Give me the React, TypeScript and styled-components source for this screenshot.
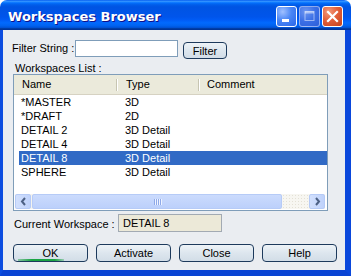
import styled, { createGlobalStyle } from 'styled-components';

const GlobalStyle = createGlobalStyle`
  html, body {
    margin: 0;
    padding: 0;
    background: #ffffff;
  }
  body {
    font-family: "Liberation Sans", Arial, sans-serif;
    font-size: 11px;
    color: #000;
  }
`;

// Window frame
const Window = styled.div`
  width: 351px;
  height: 276px;
  display: flex;
  flex-direction: column;
  overflow: hidden;
`;

const TitleBar = styled.div`
  height: 30px;
  flex: none;
  display: flex;
  align-items: center;
  padding: 0 8px 0 8px;
  border-radius: 7px 7px 0 0;
  background: linear-gradient(
    to bottom,
    #0058ee 0%,
    #3593ff 4%,
    #288eff 6%,
    #127dff 8%,
    #036ffc 10%,
    #0262ee 14%,
    #0057e5 20%,
    #0054e3 24%,
    #0055eb 56%,
    #005bf5 66%,
    #026afe 76%,
    #0062ef 86%,
    #0052d6 92%,
    #0040ab 94%,
    #003092 100%
  );
`;

const Title = styled.div`
  flex: 1;
  color: #fff;
  font-family: "DejaVu Sans", "Liberation Sans", sans-serif;
  font-weight: bold;
  font-size: 13px;
  text-shadow: 1px 1px #0f1089;
  padding-top: 2px;
`;

const Controls = styled.div`
  display: flex;
  gap: 2px;
  margin-top: 3px;
`;

const CtrlButton = styled.div<{ $kind: 'min' | 'max' | 'close' }>`
  width: 21px;
  height: 21px;
  box-sizing: border-box;
  border-radius: 3px;
  border: 1px solid ${(p) => (p.$kind === 'max' ? 'rgba(255,255,255,0.45)' : '#fff')};
  display: flex;
  align-items: center;
  justify-content: center;
  background: ${(p) =>
    p.$kind === 'close'
      ? 'radial-gradient(circle at 30% 25%, #f39a7c 0%, #e35f3a 45%, #c4421b 100%)'
      : p.$kind === 'max'
      ? 'radial-gradient(circle at 30% 25%, #6c95f0 0%, #3b6fe6 50%, #2d5fd8 100%)'
      : 'radial-gradient(circle at 30% 25%, #a0c0ff 0%, #4a86f5 45%, #2a66e8 100%)'};
`;

// Client area
const Body = styled.div`
  flex: 1;
  display: flex;
  flex-direction: column;
  background: #eaedf1;
  border-left: 3px solid #0c4de0;
  border-right: 6px solid #0a48dc;
  border-bottom: 6px solid #0a44d4;
  padding: 0 0 0 10px;
`;

const FilterRow = styled.div`
  display: flex;
  align-items: flex-start;
  margin-top: 10px;
  height: 18px;
`;

const Label = styled.span`
  line-height: 17px;
  white-space: nowrap;
`;

const FilterLabel = styled(Label)`
  margin-left: -1px;
  width: 63px;
`;

const TextInput = styled.div`
  width: 103px;
  height: 17px;
  box-sizing: border-box;
  background: #fff;
  border: 1px solid #7f9db9;
`;

const PushButton = styled.div<{ $w: number; $default?: boolean }>`
  position: relative;
  width: ${(p) => p.$w}px;
  height: 18px;
  box-sizing: border-box;
  border: 1px solid #1d3a5c;
  border-radius: 4px;
  background: linear-gradient(to bottom, #eef3f7 0%, #dde6ee 50%, #d2dde7 100%);
  display: flex;
  align-items: center;
  justify-content: center;
  line-height: 16px;
  &::after {
    content: '';
    display: ${(p) => (p.$default ? 'block' : 'none')};
    position: absolute;
    left: 4px;
    bottom: 0;
    width: 46px;
    height: 2px;
    background: linear-gradient(to right, rgba(22, 160, 60, 0.4), #1aa444 30%, #1aa444 80%, rgba(22, 160, 60, 0.3));
  }
`;

const SmallButton = styled(PushButton)`
  height: 17px;
  margin: 2px 0 0 5px;
`;

const ListLabel = styled(Label)`
  margin: 4px 0 0 2px;
  line-height: 12px;
  height: 12px;
`;

// List view
const ListBox = styled.div`
  width: 315px;
  height: 137px;
  box-sizing: border-box;
  border: 1px solid #7f9db9;
  background: #fff;
  display: flex;
  flex-direction: column;
`;

const Header = styled.div`
  height: 20px;
  flex: none;
  display: grid;
  grid-template-columns: 102px 82px 1fr;
  background: #ebeadb;
  border-bottom: 1px solid #d6d2c2;
  box-sizing: border-box;
`;

const HeaderCell = styled.div<{ $pad: number; $sep?: boolean }>`
  padding-left: ${(p) => p.$pad}px;
  line-height: 19px;
  position: relative;
  &::before {
    content: '';
    display: ${(p) => (p.$sep ? 'block' : 'none')};
    position: absolute;
    left: 0;
    top: 4px;
    height: 12px;
    width: 1px;
    background: #c7c5b2;
    box-shadow: 1px 0 #fff;
  }
`;

const Rows = styled.div`
  display: flex;
  flex-direction: column;
  padding-left: 5px;
  flex: 1;
`;

const Row = styled.div<{ $selected?: boolean }>`
  height: 14px;
  line-height: 14px;
  display: grid;
  grid-template-columns: 104px 1fr;
  padding-left: 2px;
  background: ${(p) => (p.$selected ? '#316ac5' : 'transparent')};
  color: ${(p) => (p.$selected ? '#fff' : '#000')};
`;

const ScrollBar = styled.div`
  height: 15px;
  margin: 0 2px 1px 1px;
  display: flex;
  background: #f4f3ee;
`;

const ScrollArrow = styled.div`
  width: 16px;
  height: 15px;
  box-sizing: border-box;
  border: 1px solid #b6cbf7;
  border-radius: 2px;
  background: linear-gradient(to right, #d2e0fd 0%, #bfd2fb 100%);
  display: flex;
  align-items: center;
  justify-content: center;
`;

const Thumb = styled.div`
  width: 250px;
  margin-left: 1px;
  height: 15px;
  box-sizing: border-box;
  border: 1px solid #b6cbf7;
  border-radius: 2px;
  background: linear-gradient(to bottom, #cbdbfd 0%, #bcd0fb 100%);
  display: flex;
  align-items: center;
  justify-content: center;
  gap: 1px;
`;

const Grip = styled.span`
  width: 1px;
  height: 6px;
  background: #8ea9e8;
  box-shadow: 1px 0 #eef3ff;
`;

const Track = styled.div`
  flex: 1;
  background-color: #f7f6f1;
  background-image: radial-gradient(#e4e1d6 0.6px, transparent 0.8px);
  background-size: 3px 3px;
`;

const CurrentRow = styled.div`
  display: flex;
  align-items: center;
  margin-top: 3px;
  height: 18px;
`;

const CurrentLabel = styled(Label)`
  width: 104px;
  margin-left: 1px;
  line-height: 18px;
  padding-top: 2px;
`;

const ReadOnlyBox = styled.div`
  width: 104px;
  height: 18px;
  box-sizing: border-box;
  border: 1px solid #a2aab3;
  background: #ece9d8;
  padding-left: 4px;
  line-height: 17px;
`;

const ButtonRow = styled.div`
  display: flex;
  gap: 8px;
  margin-top: 12px;
`;

const Chevron = ({ dir }: { dir: 'left' | 'right' }) => (
  <svg width="7" height="9" viewBox="0 0 7 9">
    <path
      d={dir === 'left' ? 'M5 1 L2 4.5 L5 8' : 'M2 1 L5 4.5 L2 8'}
      fill="none"
      stroke="#4d6185"
      strokeWidth="2"
    />
  </svg>
);

const rows = [
  { name: '*MASTER', type: '3D' },
  { name: '*DRAFT', type: '2D' },
  { name: 'DETAIL 2', type: '3D Detail' },
  { name: 'DETAIL 4', type: '3D Detail' },
  { name: 'DETAIL 8', type: '3D Detail', selected: true },
  { name: 'SPHERE', type: '3D Detail' },
];

export default function App() {
  return (
    <>
      <GlobalStyle />
      <Window>
        <TitleBar>
          <Title>Workspaces Browser</Title>
          <Controls>
            <CtrlButton $kind="min">
              <svg width="19" height="19" viewBox="0 0 19 19">
                <rect x="5" y="12" width="7" height="3" fill="#fff" />
              </svg>
            </CtrlButton>
            <CtrlButton $kind="max">
              <svg width="19" height="19" viewBox="0 0 19 19">
                <rect x="5" y="4.5" width="9" height="9" fill="none" stroke="rgba(255,255,255,0.5)" strokeWidth="1" />
                <rect x="5" y="4.5" width="9" height="2" fill="rgba(255,255,255,0.5)" />
              </svg>
            </CtrlButton>
            <CtrlButton $kind="close">
              <svg width="19" height="19" viewBox="0 0 19 19">
                <path d="M5 5 L14 14 M14 5 L5 14" stroke="#fff" strokeWidth="2.2" strokeLinecap="square" />
              </svg>
            </CtrlButton>
          </Controls>
        </TitleBar>
        <Body>
          <FilterRow>
            <FilterLabel>Filter String :</FilterLabel>
            <TextInput />
            <SmallButton $w={44}>Filter</SmallButton>
          </FilterRow>
          <ListLabel>Workspaces List :</ListLabel>
          <ListBox>
            <Header>
              <HeaderCell $pad={8}>Name</HeaderCell>
              <HeaderCell $pad={10} $sep>
                Type
              </HeaderCell>
              <HeaderCell $pad={9} $sep>
                Comment
              </HeaderCell>
            </Header>
            <Rows>
              {rows.map((r) => (
                <Row key={r.name} $selected={r.selected}>
                  <span>{r.name}</span>
                  <span>{r.type}</span>
                </Row>
              ))}
            </Rows>
            <ScrollBar>
              <ScrollArrow>
                <Chevron dir="left" />
              </ScrollArrow>
              <Thumb>
                <Grip />
                <Grip />
                <Grip />
                <Grip />
              </Thumb>
              <Track />
              <ScrollArrow>
                <Chevron dir="right" />
              </ScrollArrow>
            </ScrollBar>
          </ListBox>
          <CurrentRow>
            <CurrentLabel>Current Workspace :</CurrentLabel>
            <ReadOnlyBox>DETAIL 8</ReadOnlyBox>
          </CurrentRow>
          <ButtonRow>
            <PushButton $w={75} $default>
              OK
            </PushButton>
            <PushButton $w={75}>Activate</PushButton>
            <PushButton $w={75}>Close</PushButton>
            <PushButton $w={75}>Help</PushButton>
          </ButtonRow>
        </Body>
      </Window>
    </>
  );
}
